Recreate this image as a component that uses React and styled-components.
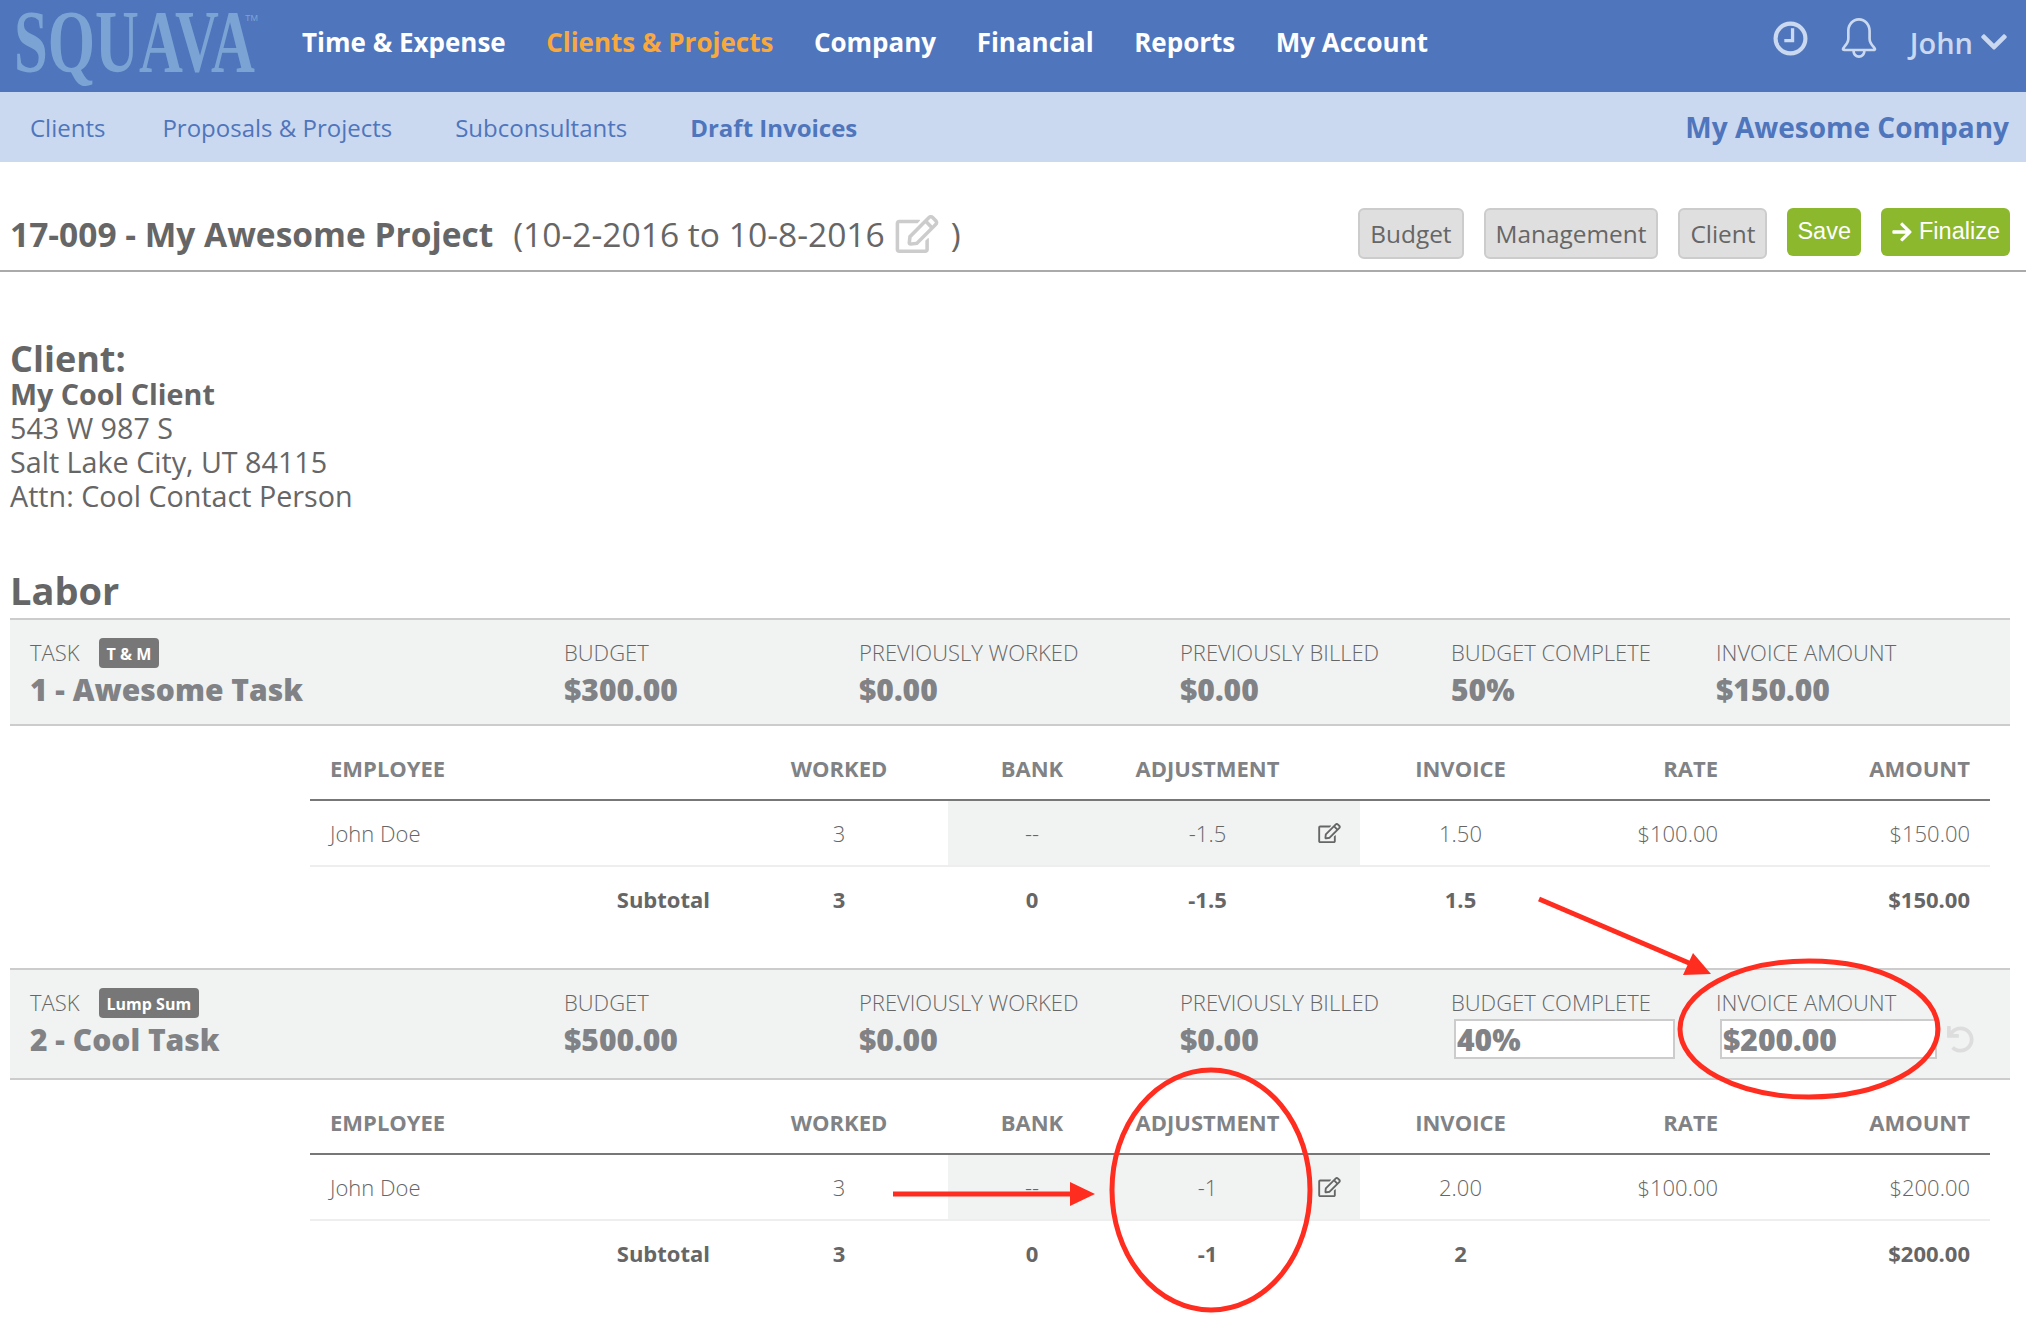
import React from 'react';
import styled, { createGlobalStyle } from 'styled-components';
import { FaChevronDown, FaRegEdit, FaArrowRight, FaUndo } from 'react-icons/fa';
import { SlBell } from 'react-icons/sl';

const GlobalStyle = createGlobalStyle`
  html, body {
    margin: 0;
    padding: 0;
    background: #fff;
  }
  body {
    font-family: "Open Sans", "Liberation Sans", sans-serif;
    color: #666;
  }
`;

const Page = styled.div`
  position: relative;
  width: 2026px;
  min-height: 1320px;
  overflow: hidden;
`;

const TopBar = styled.header`
  display: flex;
  align-items: center;
  height: 92px;
  padding: 0 17px 8px 14px;
  box-sizing: border-box;
  background: #4f75bc;
`;
const LogoSvg = styled.svg`
  width: 288px;
  height: 84px;
  flex: none;
  margin-top: 8px;
`;
const MainNav = styled.nav`
  display: flex;
  gap: 40.5px;
`;
const MainLink = styled.a`
  font-size: 26px;
  font-weight: 700;
  color: ${props => (props.$active ? '#f9a93c' : '#fff')};
  white-space: nowrap;
`;
const UserArea = styled.div`
  display: flex;
  align-items: center;
  margin-left: auto;
  color: #cbd9f0;
`;
const ClockIcon = styled.svg`
  width: 35px;
  height: 35px;
  margin: 0 31px 8px 0;
`;
const BellIcon = styled(SlBell)`
  width: 40px;
  height: 40px;
  margin: 0 31px 8px 0;
`;
const UserName = styled.span`
  font-size: 29px;
  font-weight: 600;
  margin-right: 6px;
`;
const Chevron = styled(FaChevronDown)`
  width: 30px;
  height: 30px;
`;

const SubBar = styled.div`
  display: flex;
  align-items: center;
  height: 70px;
  padding: 0 17px 0 30px;
  box-sizing: border-box;
  background: #cbd9f0;
`;
const SubLink = styled.a`
  font-size: 24px;
  font-weight: ${props => (props.$active ? 700 : 400)};
  color: #4f75bc;
  margin-right: 63px;
  white-space: nowrap;
  &:first-child {
    margin-right: 57px;
  }
`;
const CompanyName = styled.div`
  margin-left: auto;
  font-size: 28px;
  font-weight: 700;
  color: #4f75bc;
`;

const TitleRow = styled.div`
  display: flex;
  align-items: center;
  height: 110px;
  padding: 36px 16px 0 10px;
  box-sizing: border-box;
  border-bottom: 2px solid #aaa;
`;
const ProjectName = styled.h1`
  margin: 0 20px 0 0;
  font-size: 33.5px;
  font-weight: 700;
  color: #666;
  white-space: nowrap;
`;
const DateRange = styled.div`
  display: flex;
  align-items: center;
  font-size: 33.6px;
  font-weight: 400;
  color: #666;
  white-space: nowrap;
`;
const DateEdit = styled(FaRegEdit)`
  width: 44px;
  height: 38px;
  margin: 0 12px 0 10px;
  color: #ccc;
`;
const Actions = styled.div`
  display: flex;
  align-items: flex-start;
  gap: 20px;
  margin-left: auto;
  padding-bottom: 2px;
`;
const GrayButton = styled.button`
  height: 51px;
  padding: 0 10px;
  border: 2px solid #ccc;
  border-radius: 6px;
  background: #dfdfdf;
  font-family: "Open Sans", sans-serif;
  font-size: 24.4px;
  color: #666;
`;
const GreenButton = styled.button`
  display: flex;
  align-items: center;
  gap: 6px;
  height: 48px;
  padding: 0 10px;
  border: 0;
  border-radius: 6px;
  background: #8cb82e;
  font-family: "Liberation Sans", sans-serif;
  font-size: 23.5px;
  color: #fff;
`;

const ClientBlock = styled.div`
  margin: 69px 0 0 10px;
  font-size: 28.7px;
  line-height: 34px;
  color: #666;
`;
const SectionTitle = styled.h2`
  margin: 0;
  font-size: 36px;
  line-height: 36px;
  font-weight: 700;
`;
const ClientName = styled.div`
  font-weight: 700;
`;
const LaborTitle = styled(SectionTitle)`
  margin: 55px 0 6px 10px;
  font-size: 38px;
  line-height: 44px;
`;

const TaskBar = styled.div`
  display: grid;
  grid-template-columns: 534px 295px 321px 271px 265px 1fr;
  height: ${props => (props.$tall ? '112px' : '108px')};
  margin: 0 16px 0 10px;
  padding: 17px 0 0 20px;
  box-sizing: border-box;
  background: #f1f3f2;
  border-top: 2px solid #ccc;
  border-bottom: 2px solid #ccc;
  color: #808285;
`;
const FieldLabel = styled.div`
  display: flex;
  align-items: center;
  height: 30px;
  font-size: 22px;
  font-weight: 300;
  color: #666;
  white-space: nowrap;
`;
const Badge = styled.span`
  margin: 2px 0 0 19px;
  padding: 0 8px;
  height: 30px;
  line-height: 33px;
  border-radius: 4px;
  background: #777;
  color: #fff;
  font-size: 16px;
  font-weight: 700;
`;
const FieldValue = styled.div`
  display: flex;
  align-items: center;
  height: 44px;
  font-size: 30px;
  font-weight: 800;
  white-space: nowrap;
`;
const ValueInput = styled.input`
  width: ${props => props.$width}px;
  height: 40px;
  margin-left: ${props => props.$offset}px;
  padding: 0 0 0 1px;
  box-sizing: border-box;
  border: 2px solid #ccc;
  background: #fff;
  font-family: "Open Sans", sans-serif;
  font-size: 30px;
  font-weight: 800;
  color: #808285;
  outline: none;
`;
const UndoIcon = styled(FaUndo)`
  width: 27px;
  height: 29px;
  margin-left: 10px;
  color: #ddd;
  flex: none;
`;

const LineTable = styled.div`
  margin: 0 36px 37px 310px;
`;
const GridRow = styled.div`
  display: grid;
  grid-template-columns: 420px 218px 168px 244px 201px 177px 252px;
  align-items: stretch;
`;
const HeadRow = styled(GridRow)`
  height: 75px;
  padding-top: 10px;
  box-sizing: border-box;
  border-bottom: 2px solid #777;
  color: #808285;
  font-size: 22px;
  font-weight: 700;
`;
const BodyRow = styled(GridRow)`
  height: 66px;
  box-sizing: border-box;
  border-bottom: 2px solid #eee;
  font-size: 22px;
  font-weight: 300;
`;
const TotalRow = styled(GridRow)`
  height: 64px;
  font-size: 22px;
  font-weight: 700;
`;
const Cell = styled.div`
  display: flex;
  align-items: center;
  justify-content: ${props => props.$align || 'center'};
  padding: ${props => (props.$align === 'flex-start' ? '0 0 0 20px' : props.$align === 'flex-end' ? '0 20px 0 0' : '0')};
  background: ${props => (props.$shaded ? '#f1f3f2' : 'transparent')};
  white-space: nowrap;
`;
const AdjustText = styled.span`
  width: 183px;
  text-align: center;
`;
const AdjustCell = styled(Cell)`
  justify-content: flex-start;
`;
const RowEdit = styled(FaRegEdit)`
  width: 23px;
  height: 20px;
  margin-left: 19px;
  color: #666;
`;

// red markup drawn over the page
const Markup = styled.svg`
  position: absolute;
  left: 0;
  top: 0;
  width: 2026px;
  height: 1320px;
  pointer-events: none;
`;

const tasks = [
  {
    kind: 'T & M',
    name: '1 - Awesome Task',
    budget: '$300.00',
    complete: '50%',
    amount: '$150.00',
    adjust: '-1.5',
    invoice: '1.50',
    total: '$150.00',
    totalAdjust: '-1.5',
    totalInvoice: '1.5',
  },
  {
    kind: 'Lump Sum',
    name: '2 - Cool Task',
    budget: '$500.00',
    complete: '40%',
    amount: '$200.00',
    adjust: '-1',
    invoice: '2.00',
    total: '$200.00',
    totalAdjust: '-1',
    totalInvoice: '2',
    editable: true,
  },
];

function Task({ task }) {
  return (
    <>
      <TaskBar $tall={task.editable}>
        <div>
          <FieldLabel>TASK<Badge>{task.kind}</Badge></FieldLabel>
          <FieldValue>{task.name}</FieldValue>
        </div>
        <div>
          <FieldLabel>BUDGET</FieldLabel>
          <FieldValue>{task.budget}</FieldValue>
        </div>
        <div>
          <FieldLabel>PREVIOUSLY WORKED</FieldLabel>
          <FieldValue>$0.00</FieldValue>
        </div>
        <div>
          <FieldLabel>PREVIOUSLY BILLED</FieldLabel>
          <FieldValue>$0.00</FieldValue>
        </div>
        <div>
          <FieldLabel>BUDGET COMPLETE</FieldLabel>
          <FieldValue>
            {task.editable ? <ValueInput $width={221} $offset={3} value={task.complete} readOnly /> : task.complete}
          </FieldValue>
        </div>
        <div>
          <FieldLabel>INVOICE AMOUNT</FieldLabel>
          <FieldValue>
            {task.editable ? (
              <>
                <ValueInput $width={217} $offset={4} value={task.amount} readOnly />
                <UndoIcon />
              </>
            ) : task.amount}
          </FieldValue>
        </div>
      </TaskBar>
      <LineTable>
        <HeadRow>
          <Cell $align="flex-start">EMPLOYEE</Cell>
          <Cell>WORKED</Cell>
          <Cell>BANK</Cell>
          <AdjustCell><AdjustText>ADJUSTMENT</AdjustText></AdjustCell>
          <Cell>INVOICE</Cell>
          <Cell $align="flex-end">RATE</Cell>
          <Cell $align="flex-end">AMOUNT</Cell>
        </HeadRow>
        <BodyRow>
          <Cell $align="flex-start">John Doe</Cell>
          <Cell>3</Cell>
          <Cell $shaded>--</Cell>
          <AdjustCell $shaded><AdjustText>{task.adjust}</AdjustText><RowEdit /></AdjustCell>
          <Cell>{task.invoice}</Cell>
          <Cell $align="flex-end">$100.00</Cell>
          <Cell $align="flex-end">{task.total}</Cell>
        </BodyRow>
        <TotalRow>
          <Cell $align="flex-end">Subtotal</Cell>
          <Cell>3</Cell>
          <Cell>0</Cell>
          <AdjustCell><AdjustText>{task.totalAdjust}</AdjustText></AdjustCell>
          <Cell>{task.totalInvoice}</Cell>
          <Cell />
          <Cell $align="flex-end">{task.total}</Cell>
        </TotalRow>
      </LineTable>
    </>
  );
}

export default function App() {
  return (
    <Page>
      <GlobalStyle />
      <TopBar>
        <LogoSvg viewBox="0 0 288 84">
          <text x="0" y="67" fontFamily="Liberation Serif, serif" fontWeight="700" fontSize="88" fill="#7ba4d4" textLength="241" lengthAdjust="spacingAndGlyphs">SQUAVA</text>
          <text x="231" y="17" fontFamily="Liberation Sans, sans-serif" fontSize="9" fill="#7ba4d4">TM</text>
        </LogoSvg>
        <MainNav>
          <MainLink>Time &amp; Expense</MainLink>
          <MainLink $active>Clients &amp; Projects</MainLink>
          <MainLink>Company</MainLink>
          <MainLink>Financial</MainLink>
          <MainLink>Reports</MainLink>
          <MainLink>My Account</MainLink>
        </MainNav>
        <UserArea>
          <ClockIcon viewBox="0 0 34 34" fill="none" stroke="currentColor">
            <circle cx="17" cy="17" r="14.5" strokeWidth="4" />
            <path d="M19 7v12h-8" strokeWidth="3.2" />
          </ClockIcon>
          <BellIcon />
          <UserName>John</UserName>
          <Chevron />
        </UserArea>
      </TopBar>
      <SubBar>
        <SubLink>Clients</SubLink>
        <SubLink>Proposals &amp; Projects</SubLink>
        <SubLink>Subconsultants</SubLink>
        <SubLink $active>Draft Invoices</SubLink>
        <CompanyName>My Awesome Company</CompanyName>
      </SubBar>
      <TitleRow>
        <ProjectName>17-009 - My Awesome Project</ProjectName>
        <DateRange>(10-2-2016 to 10-8-2016<DateEdit />)</DateRange>
        <Actions>
          <GrayButton>Budget</GrayButton>
          <GrayButton>Management</GrayButton>
          <GrayButton>Client</GrayButton>
          <GreenButton>Save</GreenButton>
          <GreenButton><FaArrowRight size={22} />Finalize</GreenButton>
        </Actions>
      </TitleRow>
      <ClientBlock>
        <SectionTitle>Client:</SectionTitle>
        <ClientName>My Cool Client</ClientName>
        <div>543 W 987 S</div>
        <div>Salt Lake City, UT 84115</div>
        <div>Attn: Cool Contact Person</div>
      </ClientBlock>
      <LaborTitle>Labor</LaborTitle>
      {tasks.map(task => <Task key={task.name} task={task} />)}
      <Markup viewBox="0 0 2026 1320" fill="none">
        <ellipse cx="1809" cy="1029" rx="129" ry="68" stroke="#ff2d20" strokeWidth="5" />
        <ellipse cx="1211" cy="1190" rx="99" ry="120" stroke="#ff2d20" strokeWidth="5" />
        <path d="M1539 899L1696 966" stroke="#ff2d20" strokeWidth="5" />
        <path d="M1711 974L1683 975L1693 953Z" fill="#ff2d20" />
        <path d="M893 1194H1072" stroke="#ff2d20" strokeWidth="5" />
        <path d="M1095 1194L1070 1182V1206Z" fill="#ff2d20" />
      </Markup>
    </Page>
  );
}
